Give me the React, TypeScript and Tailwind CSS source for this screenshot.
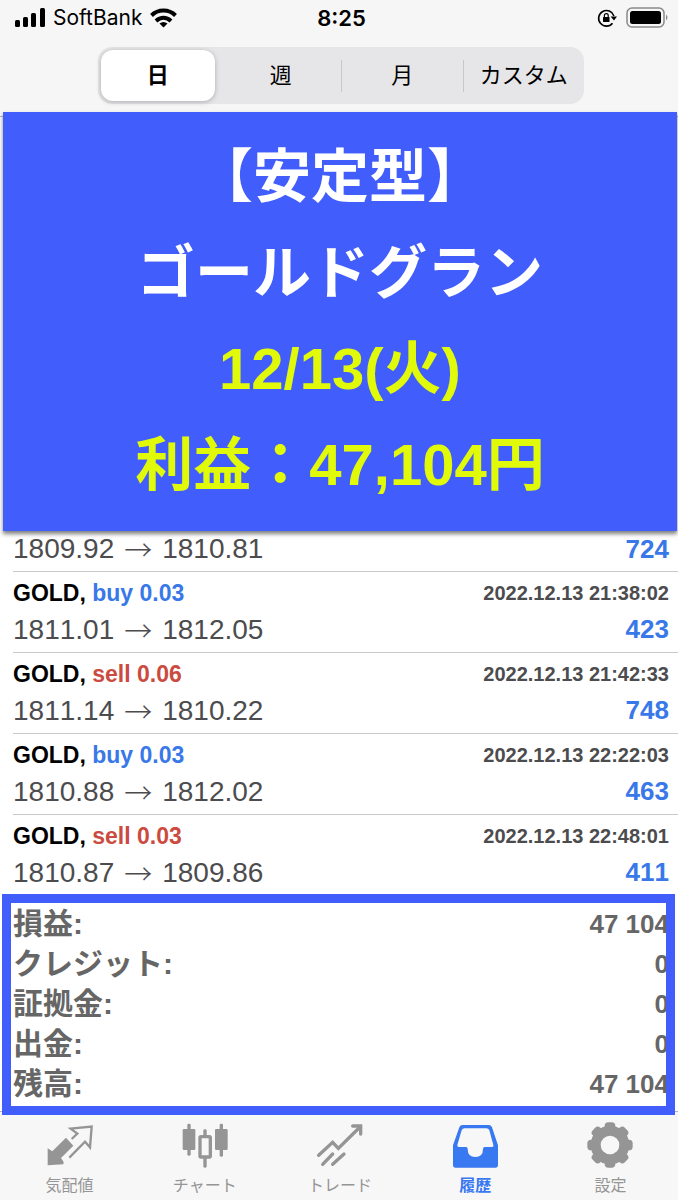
import React, { useState } from 'react';

type Deal = {
  side: 'buy' | 'sell';
  lots: string;
  time: string;
  open: string;
  close: string;
  profit: string;
};

const PERIODS = ['日', '週', '月', 'カスタム'];

const DEALS: Deal[] = [
  { side: 'buy', lots: '0.03', time: '2022.12.13 21:38:02', open: '1811.01', close: '1812.05', profit: '423' },
  { side: 'sell', lots: '0.06', time: '2022.12.13 21:42:33', open: '1811.14', close: '1810.22', profit: '748' },
  { side: 'buy', lots: '0.03', time: '2022.12.13 22:22:03', open: '1810.88', close: '1812.02', profit: '463' },
  { side: 'sell', lots: '0.03', time: '2022.12.13 22:48:01', open: '1810.87', close: '1809.86', profit: '411' },
];

const SUMMARY = [
  { label: '損益:', value: '47 104' },
  { label: 'クレジット:', value: '0' },
  { label: '証拠金:', value: '0' },
  { label: '出金:', value: '0' },
  { label: '残高:', value: '47 104' },
];

const QuotesIcon = () => (
  <svg viewBox="0 0 144 144" className="w-12 h-12" fill="none" stroke="currentColor">
    <path d="M60 50 82 74 45 111 53 123 52 130 5 133 5 82 19 91Z" fill="currentColor" stroke="none" />
    <path d="M70 110 117 62 132 79 137 17 74 23 94 38 77 54" strokeWidth="7" />
  </svg>
);

const ChartIcon = () => (
  <svg viewBox="0 0 144 144" className="w-12 h-12" fill="currentColor">
    <rect x="5" y="24" width="38" height="63" rx="4" />
    <rect x="19" y="8" width="10" height="96" rx="4" />
    <rect x="102" y="24" width="38" height="63" rx="4" />
    <rect x="116" y="8" width="10" height="99" rx="4" />
    <rect x="57" y="47" width="31" height="61" rx="3" fill="none" stroke="currentColor" strokeWidth="10" />
    <rect x="67" y="25" width="10" height="22" rx="4" />
    <rect x="67" y="108" width="10" height="32" rx="4" />
  </svg>
);

const TradeIcon = () => (
  <svg viewBox="0 0 144 144" className="w-12 h-12" fill="none" stroke="currentColor" strokeWidth="10" strokeLinecap="round">
    <path d="M8 103 50 64 67 82 132 18" />
    <path d="M110 15H134V39" />
    <path d="M20 130 50 99" />
    <path d="M50 130 84 99" />
  </svg>
);

const HistoryIcon = () => (
  <svg viewBox="0 0 144 144" className="w-12 h-12" fill="currentColor">
    <path
      fillRule="evenodd"
      d="M34 12H113Q120 12 123 19L141 73V132Q141 140 133 140H14Q6 140 6 132V73L25 19Q28 12 34 12ZM41 22Q34 22 32 28L19 72Q18 78 24 78H45Q50 78 50 84Q50 108 73 108Q96 108 96 84Q96 78 101 78H123Q129 78 127 72L115 28Q113 22 106 22Z"
    />
  </svg>
);

const SettingsIcon = () => (
  <svg viewBox="-72 -72 144 144" className="w-12 h-12" fill="currentColor">
    {[0, 45, 90, 135].map(angle => (
      <rect key={angle} x="-16" y="-68" width="32" height="136" rx="11" transform={`rotate(${angle})`} />
    ))}
    <circle r="43" fill="none" stroke="currentColor" strokeWidth="30" />
    <circle r="28" className="fill-[#f7f7f7]" />
  </svg>
);

const TABS = [
  { id: 'quotes', label: '気配値', icon: QuotesIcon },
  { id: 'chart', label: 'チャート', icon: ChartIcon },
  { id: 'trade', label: 'トレード', icon: TradeIcon },
  { id: 'history', label: '履歴', icon: HistoryIcon },
  { id: 'settings', label: '設定', icon: SettingsIcon },
];

const StatusBar = () => (
  <div className="grid grid-cols-3 items-center h-9 pl-[15px] pr-[10px] font-['Inter','Liberation_Sans',sans-serif] text-black">
    <div className="flex items-center gap-2">
      <svg viewBox="0 0 30 20" className="w-[30px] h-5" fill="currentColor">
        <rect x="0" y="12" width="5" height="7" rx="1.500" />
        <rect x="8" y="9" width="5" height="10" rx="1.500" />
        <rect x="16" y="5" width="5" height="14" rx="1.500" />
        <rect x="25" y="0" width="5" height="19" rx="1.500" />
      </svg>
      <span className="text-[21px]">SoftBank</span>
      <svg viewBox="0 0 27 20" className="w-[27px] h-5" fill="none" stroke="currentColor" strokeWidth="4">
        <path d="M1.500 7.500C8 .9 19 .9 25.500 7.500" />
        <path d="M6 13C10.500 8.800 16.500 8.800 21 13" />
        <path d="M13.500 19.500 9.500 15.500Q13.500 12.500 17.500 15.500Z" fill="currentColor" stroke="none" />
      </svg>
    </div>
    <div className="text-center text-[22px] font-semibold">8:25</div>
    <div className="flex items-center justify-end gap-[9px]">
      <svg viewBox="0 0 20 20" className="w-5 h-5" fill="none" stroke="currentColor" strokeWidth="1.600">
        <path d="M15.500 15.200A7.800 7.800 0 1 1 16.900 8" />
        <path d="M13.600 8.500H20L17 12.500Z" fill="currentColor" stroke="none" />
        <rect x="6" y="9" width="6.500" height="5" rx=".5" fill="currentColor" stroke="none" />
        <path d="M7.400 9V7.500a1.900 1.900 0 0 1 3.800 0V9" strokeWidth="1.200" />
      </svg>
      <svg viewBox="0 0 42 22" className="w-[42px] h-[22px]">
        <rect x="1" y="1" width="37" height="19" rx="5" fill="none" stroke="#8a8a8a" strokeWidth="1.500" />
        <rect x="4" y="4" width="31" height="13" rx="2.500" fill="#000" />
        <path d="M40 7.500Q43 10.500 40 13.500Z" fill="#8a8a8a" />
      </svg>
    </div>
  </div>
);

const Prices = ({ open, close }: { open: string; close: string }) => (
  <span className="flex items-center gap-2 text-[28px] text-[#4c4c4e] [font-kerning:none]">
    <span>{open}</span>
    <span className="w-8 text-center font-['Noto_Sans_CJK_JP',sans-serif] font-light">→</span>
    <span>{close}</span>
  </span>
);

const Profit = ({ value }: { value: string }) => (
  <span className="text-[26px] font-bold text-[#3878e8] [font-kerning:none]">{value}</span>
);

const DealRow = ({ deal }: { deal: Deal }) => (
  <li className="border-t border-[#c9c9cb] pt-[3px] pr-[9px] pb-1">
    <div className="flex items-center justify-between h-9 font-bold">
      <span className="text-[23px] text-black">
        GOLD, <span className={deal.side === 'buy' ? 'text-[#3878e8]' : 'text-[#cb4b40]'}>{deal.side} {deal.lots}</span>
      </span>
      <time className="text-xl text-[#4c4c4e]">{deal.time}</time>
    </div>
    <div className="flex items-center justify-between h-[37px]">
      <Prices open={deal.open} close={deal.close} />
      <Profit value={deal.profit} />
    </div>
  </li>
);

const App: React.FC = () => {
  const [period, setPeriod] = useState('日');
  const [tab, setTab] = useState('history');

  return (
    <div className="min-h-screen flex flex-col bg-white font-['Liberation_Sans','Noto_Sans_CJK_JP',sans-serif]">
      <header className="bg-[#f7f6f7] pb-3 border-b border-[#b5b5b8]">
        <StatusBar />
        <div className="mt-[11px] ml-[98px] mr-[94px] grid grid-cols-4 h-[57px] rounded-[14px] bg-[#e6e6e8]">
          {PERIODS.map((name, i) => (
            <button
              key={name}
              onClick={() => setPeriod(name)}
              aria-pressed={period === name}
              className={`text-[22px] text-black ${
                period === name
                  ? 'my-[3px] ml-[3px] mr-[5px] rounded-xl bg-white font-bold shadow-[0_1px_5px_rgba(0,0,0,0.25)]'
                  : 'flex items-center'
              }`}
            >
              {period !== name && <span className={`h-8 w-px ${i > 1 ? 'bg-[#c8c8cb]' : ''}`} />}
              <span className="flex-1 text-center">{name}</span>
            </button>
          ))}
        </div>
      </header>

      <main className="flex-1">
        <section className="relative -mt-[5px] ml-[3px] mr-px pt-[17px] pb-[18px] bg-[#415dfb] text-center text-[58px] leading-[96px] font-bold text-white shadow-[0_3px_4px_rgba(0,0,0,0.5)]">
          <h1>【安定型】</h1>
          <p>ゴールドグラン</p>
          <p className="text-[#e0fa0a]">12/13(火)</p>
          <p className="text-[#e0fa0a]">利益：47,104円</p>
        </section>

        <ul className="pl-[13px]">
          <li className="flex items-center justify-between h-10 pr-[9px] pb-1">
            <Prices open="1809.92" close="1810.81" />
            <Profit value="724" />
          </li>
          {DEALS.map(deal => (
            <DealRow key={deal.time} deal={deal} />
          ))}
        </ul>

        <section className="relative z-10 -mt-px pt-[10px] pb-[11px]">
          <dl className="pl-[13px] pr-[9px] text-3xl leading-10 font-bold text-[#666]">
            {SUMMARY.map(({ label, value }) => (
              <div key={label} className="flex justify-between h-10">
                <dt>{label}</dt>
                <dd className="text-[26px] leading-10">{value}</dd>
              </div>
            ))}
          </dl>
          {/* highlight frame over the totals */}
          <div className="absolute inset-y-0 left-[2px] right-[3px] border-[9px] border-[#415dfb] pointer-events-none" />
        </section>
      </main>

      <nav className="-mt-1 grid grid-cols-5 h-[89px] pl-[2px] border-t border-[#b5b5b8] bg-[#f7f7f7]">
        {TABS.map(({ id, label, icon: Icon }) => (
          <button
            key={id}
            onClick={() => setTab(id)}
            className={`flex flex-col items-center pt-[9px] text-base ${
              tab === id ? 'font-bold text-[#3878f0]' : 'text-[#959595]'
            }`}
          >
            <Icon />
            <span className="mt-[5px]">{label}</span>
          </button>
        ))}
      </nav>
    </div>
  );
};

export default App;
